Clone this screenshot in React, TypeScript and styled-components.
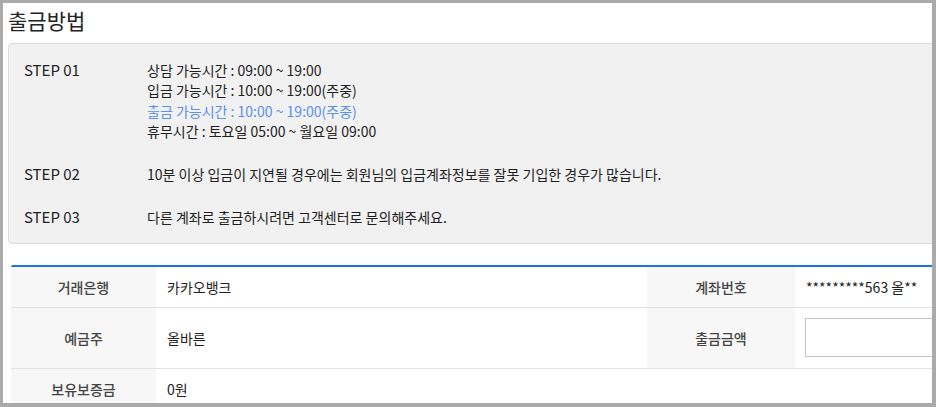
import React from 'react';
import styled, { createGlobalStyle } from 'styled-components';

const GlobalStyle = createGlobalStyle`
  html, body {
    margin: 0;
    padding: 0;
    background: #fff;
  }
  body {
    font-family: "Noto Sans CJK KR", "Noto Sans", sans-serif;
    color: #333;
  }
`;

type Step = {
  label: string;
  lines: { text: string; highlight?: boolean }[];
};

const steps: Step[] = [
  {
    label: 'STEP 01',
    lines: [
      { text: '상담 가능시간 : 09:00 ~ 19:00' },
      { text: '입금 가능시간 : 10:00 ~ 19:00(주중)' },
      { text: '출금 가능시간 : 10:00 ~ 19:00(주중)', highlight: true },
      { text: '휴무시간 : 토요일 05:00 ~ 월요일 09:00' },
    ],
  },
  {
    label: 'STEP 02',
    lines: [{ text: '10분 이상 입금이 지연될 경우에는 회원님의 입금계좌정보를 잘못 기입한 경우가 많습니다.' }],
  },
  {
    label: 'STEP 03',
    lines: [{ text: '다른 계좌로 출금하시려면 고객센터로 문의해주세요.' }],
  },
];

const App: React.FC = () => {
  return (
    <>
      <GlobalStyle />
      <Frame>
        <Page>
          <Title>출금방법</Title>
          <GuideBox>
            {steps.map((step) => (
              <StepRow key={step.label}>
                <StepLabel>{step.label}</StepLabel>
                <StepText>
                  {step.lines.map((line) => (
                    <Line key={line.text} highlight={line.highlight}>{line.text}</Line>
                  ))}
                </StepText>
              </StepRow>
            ))}
          </GuideBox>

          <InfoTable>
            <Row>
              <Label>거래은행</Label>
              <Value>카카오뱅크</Value>
              <Label>계좌번호</Label>
              <Value>*********563 올**</Value>
            </Row>
            <Row tall>
              <Label>예금주</Label>
              <Value>올바른</Value>
              <Label>출금금액</Label>
              <Value>
                <AmountInput type="text" />
              </Value>
            </Row>
            <Row>
              <Label>보유보증금</Label>
              <Value span={3}>0원</Value>
            </Row>
          </InfoTable>
        </Page>
      </Frame>
    </>
  );
};

const Frame = styled.div`
  width: 936px;
  height: 407px;
  box-sizing: border-box;
  border-style: solid;
  border-color: #aaaaaa;
  border-width: 3px 4px 4px 3px;
  overflow: hidden;
  background: #fff;
`;

const Page = styled.div`
  width: 1040px;
  padding: 2px 0 0 5px;
`;

const Title = styled.h2`
  margin: 0;
  font-size: 21px;
  line-height: 30px;
  font-weight: 400;
  color: #222;
`;

const GuideBox = styled.div`
  margin-top: 8px;
  background: #f1f1f1;
  border: 1px solid #dcdcdc;
  border-radius: 4px;
  padding: 16px 15px 15px;
  display: flex;
  flex-direction: column;
  gap: 23px;
`;

const StepRow = styled.div`
  display: flex;
`;

const StepLabel = styled.div`
  width: 123px;
  flex-shrink: 0;
  font-size: 15px;
  line-height: 20px;
  font-weight: 400;
  color: #222;
`;

const StepText = styled.div`
  display: flex;
  flex-direction: column;
`;

const Line = styled.div<{ highlight?: boolean }>`
  font-size: 14px;
  line-height: 20.3px;
  color: ${(p) => (p.highlight ? '#5b8ff0' : '#222')};
`;

const InfoTable = styled.div`
  margin: 21px 0 0 3px;
  border-top: 2px solid #1a73e8;
  border-radius: 2px 0 0 0;
`;

const Row = styled.div<{ tall?: boolean }>`
  display: grid;
  grid-template-columns: 145px 491px 148px 1fr;
  height: ${(p) => (p.tall ? '60px' : '40px')};
  border-bottom: 1px solid #e2e2e2;
`;

const Label = styled.div`
  background: #f7f7f7;
  display: flex;
  align-items: center;
  justify-content: center;
  font-size: 14px;
  font-weight: 500;
  color: #444;
`;

const Value = styled.div<{ span?: number }>`
  grid-column: span ${(p) => p.span ?? 1};
  display: flex;
  align-items: center;
  padding-left: 11px;
  font-size: 14px;
  color: #222;
`;

const AmountInput = styled.input`
  width: 300px;
  height: 39px;
  box-sizing: border-box;
  border: 1px solid #c4c4c4;
  background: #fff;
  margin-left: -1px;
  font-family: inherit;
`;

export default App;
